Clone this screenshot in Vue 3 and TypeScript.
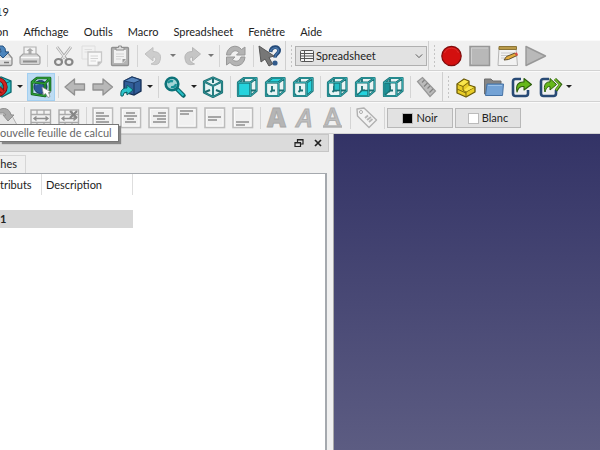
<script setup lang="ts">
import { ref } from 'vue'

interface Tool {
  id?: string
  label?: string
  menu?: boolean
  active?: boolean
  sep?: boolean
}

const menus = ['on', 'Affichage', 'Outils', 'Macro', 'Spreadsheet', 'Fenêtre', 'Aide']
const workbench = ref('Spreadsheet')
const sep: Tool = { sep: true }

const fileTools: Tool[] = [
  { id: 'save', label: 'Enregistrer' }, { id: 'print', label: 'Imprimer' }, sep,
  { id: 'cut', label: 'Couper' }, { id: 'copy', label: 'Copier' }, { id: 'paste', label: 'Coller' }, sep,
  { id: 'undo', label: 'Annuler', menu: true }, { id: 'redo', label: 'Rétablir', menu: true }, sep,
  { id: 'refresh', label: 'Rafraîchir' }, sep, { id: 'help', label: "Qu'est-ce que c'est ?" },
]
const macroTools: Tool[] = [
  { id: 'record', label: 'Enregistrer une macro' }, { id: 'stop', label: 'Arrêter' },
  { id: 'edit', label: 'Macros' }, { id: 'play', label: 'Exécuter' },
]
const viewTools: Tool[] = [
  { id: 'style', label: 'Style de représentation', menu: true }, { id: 'bounds', label: 'Nouvelle feuille de calcul', active: true }, sep,
  { id: 'back', label: 'Précédent' }, { id: 'forward', label: 'Suivant' }, { id: 'link', label: 'Lien', menu: true }, sep,
  { id: 'zoom', label: 'Zoom', menu: true }, { id: 'iso', label: 'Isométrique' }, sep,
  { id: 'front', label: 'Face' }, { id: 'top', label: 'Dessus' }, { id: 'right', label: 'Droite' }, sep,
  { id: 'rear', label: 'Arrière' }, { id: 'bottom', label: 'Dessous' }, { id: 'left', label: 'Gauche' }, sep,
  { id: 'ruler', label: 'Mesurer' },
]
const partTools: Tool[] = [
  { id: 'part', label: 'Pièce' }, { id: 'folder', label: 'Groupe' },
  { id: 'share', label: 'Créer un lien' }, { id: 'shareAll', label: 'Actions de lien', menu: true },
]
const cellTools: Tool[] = [
  { id: 'sheet', label: 'Exporter' }, sep,
  { id: 'merge', label: 'Fusionner' }, { id: 'split', label: 'Diviser' }, sep,
  { id: 'alLeft', label: 'Aligner à gauche' }, { id: 'alCenter', label: 'Centrer' }, { id: 'alRight', label: 'Aligner à droite' },
  { id: 'alTop', label: 'Aligner en haut' }, { id: 'alMiddle', label: 'Aligner au milieu' }, { id: 'alBottom', label: 'Aligner en bas' }, sep,
  { id: 'bold', label: 'Gras' }, { id: 'italic', label: 'Italique' }, { id: 'underline', label: 'Souligné' }, sep,
  { id: 'tag', label: 'Alias' }, sep,
]
const colors = [
  { name: 'Noir', value: '#000000' },
  { name: 'Blanc', value: '#ffffff' },
]

// Wire cube seen from the front right, with one face filled.
function cube(face: string, fill = '#25d3dd'): string {
  const edges = 'M2 6.5H14.5V20H2ZM2 6.5L8 2H20.5L14.5 6.5M20.5 2V15L14.5 20'
  const inner = 'M8 2V6M8 10V14.500H11M14.500 14.500H20.500M8 14.500L6.500 16M4 18L2 20'
  return `<path d="M2 6.5L8 2H20.5V15L14.5 20H2Z" fill="#e9f4f4"/>
    <path d="${inner}" fill="none" stroke="#1a7074" stroke-width="1.8"/>
    <path d="${face}" fill="${fill}" stroke="#1a7074" stroke-width="1.3" stroke-linejoin="round"/>
    <path d="${edges}" fill="none" stroke="#1a7074" stroke-width="2.2" stroke-linejoin="round"/>
    <path d="${edges}" fill="none" stroke="#3bb3b7" stroke-width=".8" stroke-linejoin="round"/>`
}

// Framed page with lines of text, each given as x, y and length.
function page(lines: number[][]): string {
  return `<rect x="1" y="1" width="19.5" height="19.5" fill="#f0f0f0" stroke="#bcbcbc" stroke-width="1.6"/>
    <rect x="2.5" y="2.5" width="16.5" height="16.5" fill="none" stroke="#fafafa"/>
    ${lines.map(([x, y, w]) => `<path d="M${x} ${y}h${w}" stroke="#8d8d8d" stroke-width="1.5"/>`).join('')}`
}

const cells = `<rect x="1" y="3" width="19.5" height="17" fill="#f2f2f2" stroke="#aaa" stroke-width="1.4"/>
  <path d="M1 7.5H20.5M1 15.5H20.5M7 3V7.5M14 3V7.5M7 15.5V20M14 15.5V20" stroke="#aaa" stroke-width="1.3"/>
  <path d="M4 11.5H18M6.5 9.5L4 11.5L6.5 13.5M15.5 9.5L18 11.5L15.5 13.5" fill="none" stroke="#8f8f8f" stroke-width="1.4"/>`

const shareBox = '<path d="M10 3H4.5Q2 3 2 5.500V17.500Q2 20 4.500 20H14.500Q17 20 17 17.500V14" fill="none" stroke="#284a75" stroke-width="2.600"/>'
const shareArrow = '<path d="M6 16C4.500 9 7.500 5.500 13 6V2.500L20.500 8.500L13 14V10.500C9 10 7 12 6 16Z" fill="#66b81b" stroke="#2c5d0c" stroke-width="1.100" stroke-linejoin="round"/>'

const icons: Record<string, string> = {
  save: '<path d="M1 12L5 7H16L21 13V19Q21 20.500 19.500 20.500H2Q1 20.500 1 19.500Z" fill="#dcdcdc" stroke="#8e8e8e" stroke-width="1.300"/><path d="M2 14H20" stroke="#fff" stroke-width="1.500"/><path d="M13 17.500H18" stroke="#777" stroke-width="1.500"/><path d="M8 1H12Q15 3 14.500 7H18L12 13L6 7H10Q10 3 7 1Z" fill="#4c85bd" stroke="#285584"/>',
  print: '<path d="M5 10V2H17V10" fill="#f3f3f3" stroke="#b1b1b1" stroke-width="1.200"/><path d="M11 3L14.500 6H12.500V9H9.500V6H7.500Z" fill="#aaa"/><path d="M1 12L4 9H18L21 12V18Q21 19.500 19.500 19.500H2.500Q1 19.500 1 18Z" fill="#d4d4d4" stroke="#a2a2a2" stroke-width="1.200"/><path d="M2 12.500H20" stroke="#f8f8f8" stroke-width="1.500"/><path d="M4 16.500H18" stroke="#8e8e8e" stroke-width="2"/>',
  cut: '<path d="M4 2L14 15M18 2L8 15" stroke="#aaa" stroke-width="2.800"/><path d="M4 2L13.500 15M18 2L9 14" stroke="#ededed" stroke-width="1.200"/><ellipse cx="5.500" cy="17" rx="3.500" ry="3" fill="none" stroke="#878787" stroke-width="2.200"/><ellipse cx="16" cy="17" rx="3.500" ry="3" fill="none" stroke="#878787" stroke-width="2.200"/>',
  copy: '<path d="M1 1H14V14H1Z" fill="#f1f1f1" stroke="#dedede"/><path d="M3.500 4.500H11M3.500 7H11" stroke="#dedede"/><path d="M7 7H20.500V17L17 20.500H7Z" fill="#f8f8f8" stroke="#c8c8c8" stroke-width="1.300"/><path d="M9.500 11H17M9.500 13.500H17M9.500 16H15" stroke="#d4d4d4"/><path d="M20.500 16.500H16.500V20.500Z" fill="#bcbcbc"/>',
  paste: '<rect x="2.500" y="2.500" width="17" height="18" rx="1" fill="#b5b5b5" stroke="#929292" stroke-width="1.300"/><path d="M5 5H17V15L14 18H5Z" fill="#f1f1f1"/><path d="M7 9H15M7 11.500H15M7 14H12" stroke="#d3d3d3"/><path d="M7 5V2.500H9.500V1H12.500V2.500H15V5Z" fill="#ddd" stroke="#8f8f8f"/><path d="M17 14H13.500V18Z" fill="#999"/>',
  undo: '<path d="M2 9L10 2.500V6.500C17 6.500 19.500 11 16 18C13.500 20.500 10 19.500 8 19C14 16.500 14 12 10 12V16Z" fill="#cdcdcd" stroke="#c0c0c0" stroke-linejoin="round"/>',
  redo: '<path d="M19.500 9L11.500 2.500V6.500C4.500 6.500 2 11 5.500 18C8 20.500 11.500 19.500 13.500 19C7.500 16.500 7.500 12 11.500 12V16Z" fill="#c5c5c5" stroke="#b6b6b6" stroke-linejoin="round"/>',
  refresh: '<path d="M1.500 10C2 1 12 -1.500 16.500 4.500L20 2V10H11.500L14 7.500C11 4.500 7 5.500 5.500 10Z" fill="#b3b3b3" stroke="#989898"/><path d="M20 12C19.500 21 9.500 23.500 5 17.500L1.500 20V12H10L7.500 14.500C10.500 17.500 14.500 16.500 16 12Z" fill="#b3b3b3" stroke="#989898"/>',
  help: '<path d="M11.500 7C12 1 20.500 .500 20 6C19.700 9 16 9 16 12.500" fill="none" stroke="#234978" stroke-width="3.800"/><path d="M11.500 6.500C12.500 2 20 1.500 19.500 6C19 8.500 16 9 16 12.500" fill="none" stroke="#4b78ab" stroke-width="1.500"/><circle cx="16" cy="18" r="2.600" fill="#315a8b"/><path d="M0 1L2 17L6 14L10 21L13.500 19L10 12.500L15 11Z" fill="#777" stroke="#565656"/>',
  record: '<circle cx="10.500" cy="11" r="9.700" fill="#d3100f" stroke="#800b0b" stroke-width="1.200"/><path d="M3.500 8A7.500 7.500 0 0 1 17.500 8" fill="none" stroke="#dd302e" stroke-width="1"/>',
  stop: '<rect x="1" y="1.500" width="19.500" height="19" fill="#b8b8b8" stroke="#979797" stroke-width="1.500"/><path d="M2.500 19V3H19" fill="none" stroke="#cfcfcf"/>',
  edit: '<path d="M2 3H19L20.500 20.500H1Z" fill="#f2f2f2" stroke="#b5b5b5"/><path d="M2 1.500H19.500V4.500H2Z" fill="#b99a49" stroke="#8c7537"/><path d="M4 8H17M4 10.500H15M4 13H11" stroke="#c8c8c8"/><path d="M7 15L9.500 11.500L18 8L20 10.500L11.500 14.500Z" fill="#e2ab3d" stroke="#60502d"/><path d="M17.500 8L20 7.500L21 10L19.500 11Z" fill="#d84c44"/>',
  play: '<path d="M1 1.500L20.500 11L1 20.500Z" fill="#b9b9b9" stroke="#989898" stroke-width="1.400" stroke-linejoin="round"/>',
  style: '<path d="M2 5L11 1L21 5V16L12 21L2 16Z" fill="#27bdc6" stroke="#0d696e" stroke-width="1.300"/><path d="M12 9V20M12 9L21 5" stroke="#0d696e"/><circle cx="8" cy="11" r="7.500" fill="none" stroke="#730d0d" stroke-width="4.400"/><circle cx="8" cy="11" r="7.500" fill="none" stroke="#cf2421" stroke-width="2.800"/><path d="M3 6L13 16" stroke="#730d0d" stroke-width="4.400"/><path d="M3 6L13 16" stroke="#cf2421" stroke-width="2.800"/>',
  bounds: '<circle cx="10.500" cy="11" r="6.500" fill="#2c5a9b" stroke="#173867"/><path d="M5.500 9Q8.500 6 12.500 8" fill="none" stroke="#6893c8" stroke-width="1.500"/><path d="M2 6L7 2H20V15L15 20L2 18ZM2 6L15 7.500V20M15 7.500L20 2" fill="none" stroke="#0c5319" stroke-width="2.600" stroke-linejoin="round"/><path d="M2 6L7 2H20V15L15 20L2 18ZM2 6L15 7.500V20M15 7.500L20 2" fill="none" stroke="#2c9d36" stroke-width="1.300"/><path d="M12 11L13.500 19L15.500 17.500L18 21.500L20 20.500L18.500 16.500L21 16Z" fill="#fff" stroke="#888" stroke-width=".700"/>',
  back: '<path d="M1 11L10.500 3V8H20.500V14H10.500V19Z" fill="#b8b8b8" stroke="#919191" stroke-width="1.300" stroke-linejoin="round"/>',
  forward: '<path d="M20.500 11L11 3V8H1V14H11V19Z" fill="#b8b8b8" stroke="#919191" stroke-width="1.300" stroke-linejoin="round"/>',
  link: '<path d="M4 5L12 1L21 4V15L14 19L4 16Z" fill="#315d98" stroke="#152f55" stroke-width="1.300"/><path d="M4 5L12 1L21 4L14 7Z" fill="#5685bd" stroke="#1c3c68"/><path d="M14 7V19" stroke="#152f55"/><path d="M1 20C0 14 3 12 7 12V9L13 14L7 19V16Q3 16 3 20Z" fill="#2cc4cb" stroke="#0c6568"/>',
  zoom: '<path d="M13 13L19.500 19.500" stroke="#0b686c" stroke-width="4.500" stroke-linecap="round"/><path d="M13.500 13.500L19.500 19.500" stroke="#26bec7" stroke-width="2"/><circle cx="8" cy="8" r="6.300" fill="#a5d5d6" stroke="#0d7379" stroke-width="2.600"/><path d="M4 7Q6 4 9 5.500M12 8Q11 12 7 11" fill="none" stroke="#178f95" stroke-width="2.200"/>',
  iso: '<path d="M2 5.500L11 1.500L20 5.500V16.500L11 21L2 16.500Z" fill="#e5f3f3" stroke="#1a6a6e" stroke-width="2.200" stroke-linejoin="round"/><path d="M2 5.500L11 10L20 5.500M11 10V21M11 1.500V7M2 16.500L8 14M20 16.500L14 14" fill="none" stroke="#1a6a6e" stroke-width="2"/><path d="M2 5.500L11 1.500L20 5.500V16.500L11 21L2 16.500ZM2 5.500L11 10L20 5.500M11 10V21" fill="none" stroke="#3ba5a8" stroke-width=".700"/>',
  front: cube('M2 6.5H14.5V20H2Z'),
  top: cube('M2 6.5L8 2H20.5L14.5 6.5Z'),
  right: cube('M14.5 6.5L20.5 2V15L14.5 20Z'),
  rear: cube('M8 6.5H14.5V14.5H8Z', '#24bec7'),
  bottom: cube('M2 20L8 14.5H14.5V20Z'),
  left: cube('M2 6.5H8V14.5L2 20Z', '#1b9298'),
  ruler: '<path d="M1.500 5.500L6.500 1.500L19.500 15L14 20.500Z" fill="#bbb" stroke="#989898" stroke-width="1.200"/><path d="M8.500 4L6 6.500M11.500 7L8 10.500M14 10L11.500 12.500M17 13L13.500 16.500" stroke="#818181" stroke-width="1.200"/>',
  part: '<path d="M2 8L9 3L14 5V9L20 11V16L11 21L2 17Z" fill="#e8cc26" stroke="#6b5b08" stroke-width="1.300" stroke-linejoin="round"/><path d="M2 8L8 10.500L14 6M8 10.500V14L11 16L20 11M11 16V21M2 13L11 17" fill="none" stroke="#7b690c"/><path d="M3 8L9 4L13 5.500L8 9.500ZM9 14L14 10L19 11.500L11 15.500Z" fill="#f8e64e"/>',
  folder: '<path d="M1.500 18V3H8L10 5H18V18Z" fill="#858585" stroke="#6f6f6f"/><path d="M4 8H20.500L19.500 19.500H2.500Z" fill="#73a2d5" stroke="#4572a5"/><path d="M5 9.500H19" stroke="#9bc0e5"/>',
  share: shareBox + shareArrow,
  shareAll: shareBox + '<path d="M16 3L21.500 8.500L17 14.500" fill="none" stroke="#32670e" stroke-width="3"/><path d="M16 3L21 8.500L17 14" fill="none" stroke="#78bd30" stroke-width="1.400"/><path d="M6 16C4 9 7 5.500 11 6V2.500L17.500 8.500L11 14V10.500C9 10 7 12 6 16Z" fill="#66b81b" stroke="#2c5d0c"/>',
  sheet: '<path d="M1 7H15L21 18V21H1Z" fill="#e5e5e5" stroke="#b2b2b2"/><path d="M1 4C8 -1 14 2 15 8H18L12 14L7 8H10Q8 4 1 7Z" fill="#a9a9a9" stroke="#909090"/>',
  merge: cells,
  split: cells + '<path d="M12 4L19 11M19 4L12 11" stroke="#858585" stroke-width="2.200"/>',
  alLeft: page([[4, 6, 8], [4, 9, 13], [4, 12, 9], [4, 15, 13]]),
  alCenter: page([[6, 6, 9], [4, 9, 13], [7, 12, 7], [5, 15, 11]]),
  alRight: page([[10, 6, 8], [5, 9, 13], [9, 12, 9], [5, 15, 13]]),
  alTop: page([[4, 4, 13], [4, 7, 9]]),
  alMiddle: page([[4, 10, 13], [4, 13, 9]]),
  alBottom: page([[4, 15, 13], [4, 18, 9]]),
  bold: '<text x="10.500" y="20" text-anchor="middle" font-family="Open Sans, sans-serif" font-size="26" font-weight="800" fill="#b5b5b5" stroke="#a6a6a6" stroke-width=".800">A</text>',
  italic: '<text x="10.500" y="20" text-anchor="middle" font-family="Open Sans, sans-serif" font-size="26" font-weight="600" font-style="italic" fill="#bebebe" stroke="#adadad" stroke-width="1">A</text>',
  underline: '<text x="10.500" y="18" text-anchor="middle" font-family="Open Sans, sans-serif" font-size="24" font-weight="600" fill="#bebebe" stroke="#adadad" stroke-width="1">A</text><path d="M1 19.500H20" stroke="#b1b1b1" stroke-width="2.500"/>',
  tag: '<path d="M1 2L8 1L20.500 13L13 20.500L1.500 9Z" fill="#f3f3f3" stroke="#b1b1b1" stroke-width="1.400" stroke-linejoin="round"/><circle cx="5" cy="5" r="1.500" fill="#fff" stroke="#aaa"/><path d="M9 11L12 8.500M11 13L15 10M13 15L16.500 12" stroke="#b5b5b5" stroke-width="1.800"/>',
}

const rows: { name: string; groups: { kind?: string; tools: Tool[] }[] }[] = [
  { name: 'file', groups: [{ tools: fileTools }, { kind: 'workbench', tools: [] }, { tools: macroTools }] },
  { name: 'view', groups: [{ tools: viewTools }, { tools: partTools }] },
  { name: 'cell', groups: [{ kind: 'colors', tools: cellTools }] },
]
</script>

<template>
  <div class="window">
    <header class="titlebar">19</header>
    <nav class="menubar">
      <a v-for="m in menus" :key="m" href="#">{{ m }}</a>
    </nav>

    <div v-for="row in rows" :key="row.name" class="toolrow" :class="row.name">
      <div v-for="(group, g) in row.groups" :key="g" class="toolbar">
        <span v-if="g > 0" class="handle"></span>
        <template v-for="(t, i) in group.tools" :key="i">
          <span v-if="t.sep" class="sep"></span>
          <button v-else type="button" class="tool" :class="{ active: t.active, drop: t.menu }" :aria-label="t.label">
            <svg class="icon" viewBox="0 0 22 22" aria-hidden="true" v-html="icons[t.id!]"></svg>
            <span v-if="t.menu" class="caret" :class="{ dim: t.id === 'undo' || t.id === 'redo' }"></span>
          </button>
        </template>

        <div v-if="group.kind === 'workbench'" class="workbench">
          <svg class="grid-icon" viewBox="0 0 14 12" aria-hidden="true">
            <rect x=".5" y=".5" width="13" height="11" rx="1" fill="#f5f5f5" stroke="#555" />
            <path d="M1 3.500H13M1 6H13M1 8.500H13M4.500 1V11" stroke="#555" />
          </svg>
          <select v-model="workbench" aria-label="Atelier">
            <option>Spreadsheet</option>
          </select>
          <svg class="chevron" viewBox="0 0 10 6" aria-hidden="true">
            <path d="M1 1L5 5L9 1" fill="none" stroke="#555" stroke-width="1.200" />
          </svg>
        </div>

        <template v-if="group.kind === 'colors'">
          <button v-for="c in colors" :key="c.name" type="button" class="color">
            <span class="swatch" :style="{ background: c.value }"></span>{{ c.name }}
          </button>
        </template>
      </div>
      <div v-if="row.name === 'cell'" class="tooltip" role="tooltip">ouvelle feuille de calcul</div>
    </div>

    <main class="body">
      <aside class="dock">
        <div class="dock-title">
          <button type="button" aria-label="Détacher">
            <svg viewBox="0 0 10 10" aria-hidden="true">
              <path d="M3.500 4V1.500H9V6H7M3.500 2H9M1 4.500H6.500V8.500H1ZM1 5H6.500" fill="none" stroke="#222" stroke-width="1.200" />
            </svg>
          </button>
          <button type="button" aria-label="Fermer">
            <svg viewBox="0 0 10 10" aria-hidden="true">
              <path d="M2 2L8 8M8 2L2 8" stroke="#222" stroke-width="1.700" />
            </svg>
          </button>
        </div>
        <div class="tabs"><button type="button" class="tab">ches</button></div>
        <div class="tree">
          <table>
            <thead>
              <tr><th scope="col">tributs</th><th scope="col">Description</th></tr>
            </thead>
            <tbody>
              <tr class="group"><td></td><td></td></tr>
              <tr class="selected"><td>1</td><td></td></tr>
            </tbody>
          </table>
        </div>
      </aside>
      <section class="viewport"></section>
    </main>
  </div>
</template>

<style>
body {
  margin: 0;
  background: #f0f0f0;
}
</style>

<style scoped>
.window {
  display: flex;
  flex-direction: column;
  min-height: 100vh;
  overflow: hidden;
  background: #f0f0f0;
  color: #222;
  font: 11px/16px Lato, "Open Sans", sans-serif;
}
button,
select {
  margin: 0;
  padding: 0;
  border: 0;
  background: none;
  color: inherit;
  font: inherit;
}
.titlebar {
  height: 21px;
  margin-left: -4px;
  background: #fff;
  line-height: 24px;
}
.menubar {
  display: flex;
  gap: 15px;
  height: 19px;
  margin-left: -4px;
  background: #fff;
  line-height: 22px;
}
.menubar a {
  color: inherit;
  text-decoration: none;
}
.toolrow {
  position: relative;
  display: flex;
  box-sizing: border-box;
  height: 31px;
  border-top: 1px solid #fafafa;
  border-bottom: 1px solid #d2d2d2;
}
.toolrow.cell {
  height: 32px;
}
.file .toolbar:first-child {
  margin-left: -12px;
}
.view .toolbar:first-child {
  margin-left: -13px;
}
.cell .toolbar:first-child {
  margin-left: -7px;
}
.toolbar {
  display: flex;
  align-items: center;
  flex: none;
  padding-right: 1px;
  border-right: 1px solid #cfcfcf;
}
.toolbar:last-of-type,
.cell .toolbar {
  border-right: 0;
}
.handle {
  width: 3px;
  height: 24px;
  margin: 0 2px 0 4px;
  background: radial-gradient(circle, #c4c4c4 1px, transparent 1px) 0 0 / 3px 4px;
}
.sep {
  width: 1px;
  height: 22px;
  margin: 0 2px 0 3px;
  background: #d4d4d4;
}
.tool {
  position: relative;
  display: flex;
  align-items: center;
  box-sizing: border-box;
  width: 28px;
  height: 28px;
  padding: 0 3px;
}
.tool.drop {
  width: 38px;
}
.view .tool:first-child {
  width: 40px;
}
.tool.active {
  background: #bddcf3;
  box-shadow: inset 0 0 0 1px #a2cff1;
}
.icon {
  flex: none;
  width: 22px;
  height: 22px;
  overflow: visible;
}
.caret {
  margin-left: 5px;
  border: 3px solid transparent;
  border-top-color: #222;
  border-bottom: 0;
}
.caret.dim {
  border-top-color: #777;
}
.workbench {
  position: relative;
  width: 132px;
  height: 20px;
}
.workbench select {
  box-sizing: border-box;
  width: 100%;
  height: 100%;
  padding-left: 20px;
  border: 1px solid #b0b0b0;
  background: #e2e2e2;
  appearance: none;
}
.grid-icon {
  position: absolute;
  top: 4px;
  left: 5px;
  width: 14px;
  height: 12px;
}
.chevron {
  position: absolute;
  top: 7px;
  right: 4px;
  width: 8px;
  height: 6px;
}
.color {
  display: flex;
  align-items: center;
  justify-content: center;
  gap: 3px;
  box-sizing: border-box;
  width: 66px;
  height: 20px;
  margin-right: 2px;
  border: 1px solid #b8b8b8;
  background: #e2e2e2;
}
.swatch {
  box-sizing: border-box;
  width: 11px;
  height: 11px;
  border: 1px solid #bbb;
}
.tooltip {
  position: absolute;
  z-index: 1;
  top: 21px;
  left: 0;
  padding-right: 6px;
  border: 1px solid #777;
  border-left: 0;
  background: #fff;
  box-shadow: 2px 2px 1px #888;
  color: #666;
}
.body {
  display: flex;
  flex: 1;
}
.dock {
  display: flex;
  flex: none;
  flex-direction: column;
  box-sizing: border-box;
  width: 334px;
  padding-right: 4px;
  border-right: 1px solid #aaa;
}
.dock-title {
  display: flex;
  justify-content: flex-end;
  align-items: center;
  gap: 9px;
  box-sizing: border-box;
  height: 18px;
  padding-right: 5px;
  border: 1px solid #c6c6c6;
  border-left: 0;
  background: #dbdbdb;
}
.dock-title button {
  display: flex;
}
.dock-title svg {
  width: 10px;
  height: 10px;
}
.tabs {
  display: flex;
  height: 18px;
  padding-top: 3px;
}
.tab {
  box-sizing: border-box;
  width: 26px;
  padding-right: 8px;
  border: 1px solid #d6d6d6;
  border-width: 1px 1px 0 0;
  display: flex;
  justify-content: flex-end;
}
.tree {
  flex: 1;
  margin-right: 2px;
  border: 1px solid #a5a9ae;
  border-width: 1px 2px 0 0;
  background: #fff;
}
table {
  border-collapse: separate;
  border-spacing: 0;
  table-layout: fixed;
  width: 133px;
}
th,
td {
  box-sizing: border-box;
  padding: 0;
}
th {
  height: 21px;
  border-right: 1px solid #dedede;
  font-weight: 400;
  text-align: left;
}
th:first-child {
  width: 42px;
}
th + th {
  padding-left: 4px;
}
.group td {
  height: 15px;
}
.selected td {
  height: 18px;
  background: #d7d7d7;
  font-weight: 700;
}
.viewport {
  flex: 1;
  background: linear-gradient(#333366, #5c5c82);
}
</style>
